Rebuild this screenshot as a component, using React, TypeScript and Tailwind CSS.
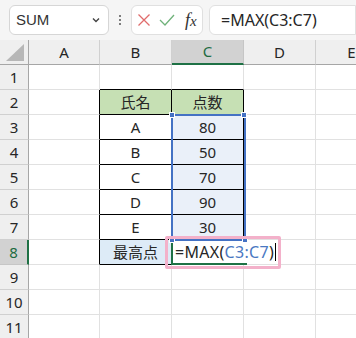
import React from "react";

const COLS = ["A", "B", "C", "D", "E"];
const ROWS = [1, 2, 3, 4, 5, 6, 7, 8, 9, 10, 11];

const DATA: Record<string, string> = {
  B2: "氏名",
  C2: "点数",
  B3: "A",
  C3: "80",
  B4: "B",
  C4: "50",
  B5: "C",
  C5: "70",
  B6: "D",
  C6: "90",
  B7: "E",
  C7: "30",
  B8: "最高点",
};

function inTable(c: string, r: number) {
  return (c === "B" || c === "C") && r >= 2 && r <= 8;
}

function cellClass(c: string, r: number) {
  const rightBlack = (c === "A" && r >= 2 && r <= 8) || inTable(c, r);
  const bottomBlack = (c === "B" || c === "C") && r >= 1 && r <= 8;
  let bg = "bg-white";
  if (r === 2 && inTable(c, r)) bg = "bg-[#c6e0b4]";
  else if (c === "C" && r >= 3 && r <= 7) bg = "bg-[#eaf0f9]";
  else if (c === "B" && r === 8) bg = "bg-[#ddebf7]";
  return [
    "h-[25px] border-r border-b flex items-center justify-center text-[15px] text-[#262626]",
    rightBlack ? "border-r-black" : "border-r-[#e1e1e1]",
    bottomBlack ? "border-b-black" : "border-b-[#e1e1e1]",
    bg,
  ].join(" ");
}

function Handle({ className }: { className: string }) {
  return <div className={"absolute w-[6px] h-[6px] bg-[#4472c4] border border-white " + className} />;
}

export default function App() {
  return (
    <div className="w-[356px] h-[338px] overflow-hidden bg-white font-['Noto_Sans','Noto_Sans_CJK_JP',sans-serif] select-none">
      {/* Formula bar */}
      <div className="h-[40px] bg-[#f5f5f5] flex items-center pl-[9px]">
        <div className="w-[100px] h-[30px] bg-white border border-[#d6d6d6] rounded-md flex items-center justify-between pl-[6px] pr-[7px]">
          <span className="text-[15px] text-[#333] font-['Liberation_Sans',sans-serif]">SUM</span>
          <svg width="10" height="10" viewBox="0 0 10 10" className="text-[#444]">
            <path d="M2 3.5 L5 6.5 L8 3.5" fill="none" stroke="currentColor" strokeWidth="1.4" />
          </svg>
        </div>
        <div className="w-[22px] flex flex-col items-center gap-[2px]">
          <span className="w-[2px] h-[2px] bg-[#555] rounded-full" />
          <span className="w-[2px] h-[2px] bg-[#555] rounded-full" />
          <span className="w-[2px] h-[2px] bg-[#555] rounded-full" />
        </div>
        <div className="w-[72px] h-[30px] bg-white border border-[#e0e0e0] rounded-md flex items-center pl-[5px] gap-[8px]">
          <svg width="14" height="14" viewBox="0 0 14 14">
            <path d="M1.5 1.5 L12.5 12.5 M12.5 1.5 L1.5 12.5" stroke="#e06c6c" strokeWidth="1.3" fill="none" />
          </svg>
          <svg width="16" height="14" viewBox="0 0 16 14">
            <path d="M1 7 L6 12 L15 2" stroke="#6fb27a" strokeWidth="1.3" fill="none" />
          </svg>
          <span className="ml-[2px] text-[18px] italic text-[#333] font-['Liberation_Serif',serif] leading-none">
            f<span className="text-[15px]">x</span>
          </span>
        </div>
        <div className="ml-[6px] flex-1 h-[30px] bg-white border border-[#e0e0e0] rounded-l-md flex items-center pl-[11px]">
          <span className="text-[16px] text-[#262626]">=MAX(C3:C7)</span>
        </div>
      </div>

      {/* Sheet */}
      <div className="relative">
        <div className="grid grid-cols-[29px_71px_72px_72px_72px_72px]">
          {/* header row */}
          <div className="h-[25px] bg-[#efefef] border-r border-r-[#a6a6a6] border-b border-b-[#a6a6a6] relative">
            <svg width="20" height="18" viewBox="0 0 20 18" className="absolute right-[3px] bottom-[2px]">
              <path d="M19 0 L19 17 L1 17 Z" fill="#b7b7b7" />
            </svg>
          </div>
          {COLS.map((c) =>
            c === "C" ? (
              <div
                key={c}
                className="h-[25px] bg-[#d2d2d2] border-r border-r-[#c6c6c6] border-b-2 border-b-[#1e7145] flex items-center justify-center text-[15px] text-[#1e6b41]"
              >
                {c}
              </div>
            ) : (
              <div
                key={c}
                className="h-[25px] bg-[#efefef] border-r border-r-[#d0d0d0] border-b border-b-[#a6a6a6] flex items-center justify-center text-[15px] text-[#262626]"
              >
                {c}
              </div>
            )
          )}

          {ROWS.map((r) => (
            <React.Fragment key={r}>
              {r === 8 ? (
                <div className="h-[25px] bg-[#d2d2d2] border-r-2 border-r-[#1e7145] border-b border-b-[#c6c6c6] flex items-center justify-center text-[15px] text-[#1e6b41]">
                  {r}
                </div>
              ) : (
                <div className="h-[25px] bg-[#efefef] border-r border-r-[#a6a6a6] border-b border-b-[#d0d0d0] flex items-center justify-center text-[15px] text-[#262626]">
                  {r}
                </div>
              )}
              {COLS.map((c) => (
                <div key={c + r} className={cellClass(c, r)}>
                  <span>{DATA[c + r] ?? ""}</span>
                </div>
              ))}
            </React.Fragment>
          ))}
        </div>

        {/* Referenced range C3:C7 */}
        <div className="absolute left-[171px] top-[74px] w-[75px] h-[127px] border-2 border-[#4472c4]" />
        <Handle className="left-[169px] top-[72px]" />
        <Handle className="left-[241px] top-[72px]" />

        {/* Active cell C8 in edit mode */}
        <div className="absolute left-[171px] top-[199px] w-[76px] h-[26px] border-l-2 border-b-2 border-[#1e7145]" />
        <div className="absolute left-[173px] top-[201px] pl-[2px] pr-[2px] h-[22px] bg-white flex items-center text-[16px] tracking-[0.3px] text-[#262626] leading-none">
          <span>=MAX(</span>
          <span className="text-[#4a78c2]">C3:C7</span>
          <span>)</span>
          <span className="ml-[1px] w-px h-[18px] bg-black" />
        </div>
        <Handle className="left-[169px] top-[197px]" />
        <Handle className="left-[242px] top-[197px]" />

        {/* Annotation */}
        <div className="absolute left-[165px] top-[196px] w-[116px] h-[33px] border-[3px] border-[#f3b1ca] rounded-[2px]" />
      </div>
    </div>
  );
}
